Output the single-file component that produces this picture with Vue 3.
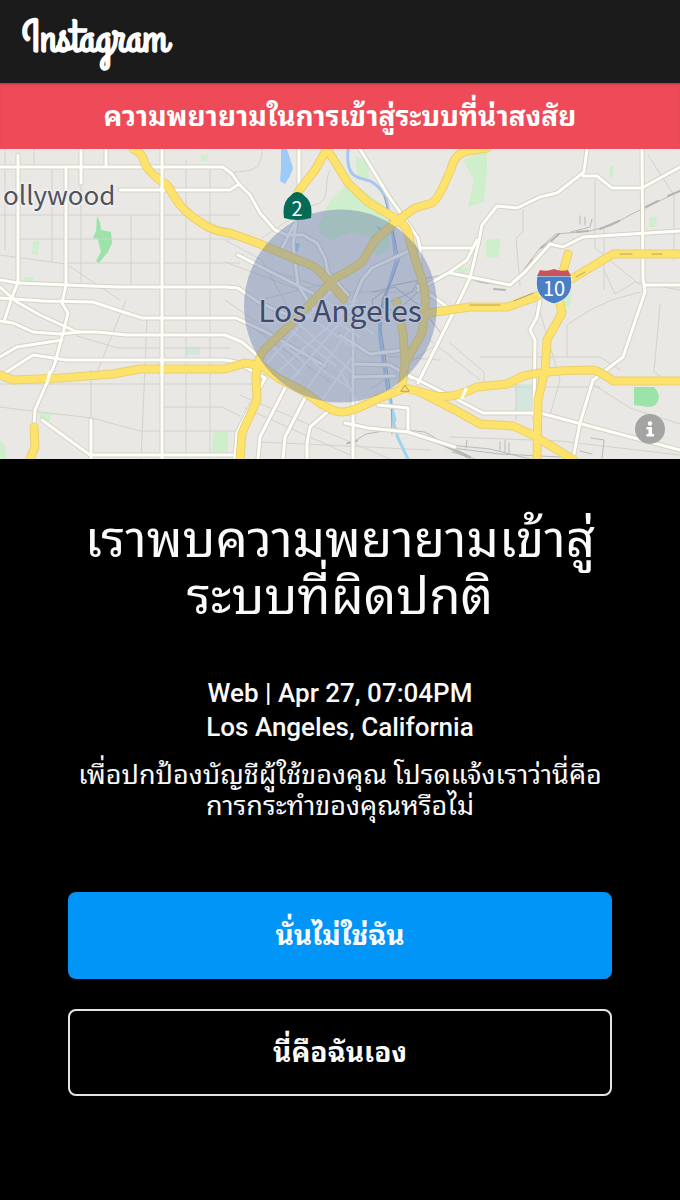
<script setup>
const minorStreets = [
  'M5 149V250 M34 149V166 M52 167V262 M131 215V285 M186 160V459 M210 170V459 M147 320L141 459',
  'M0 215H240 M18 239H240 M66 263H240 M0 384H260 M0 407L40 412L92 418L140 431H240 M162 407H222L240 416',
  'M0 255L66 264L120 300 M126 300L98 370 M91 370V420 M77 336L118 348H230 M81 186V282',
  'M262 149C262 178 243 168 226 174 M330 170C322 186 334 202 310 206L262 238 M225 262L300 290 M225 300L290 345',
  'M225 240L262 260L300 330 M270 270L330 290 M260 300L340 280 M245 322L330 382 M340 292L420 292',
  'M595 180V248L640 285 M523 210V232L516 238L520 285 M604 230V290 M480 357H600L620 370 M450 343L484 372V390',
  'M567 357V325L590 310L612 300L640 292 M660 305L654 372L668 382 M594 385L630 408L680 424 M516 384V420 M477 387H600',
  'M648 155L674 195V260 M604 270L615 294L635 282L680 290 M450 437L560 441L680 455 M540 312L560 380L550 415',
  'M245 408L350 455 M240 395L390 459 M370 355L440 360 M372 388L440 342 M260 442L430 450 M430 340L480 380',
]
const streets = [
  'M18 155V282L11 300L4 322',
  'M0 167H223L232 174L239 184L250 195L260 213L275 230L287 235L303 235L317 243L325 258L328 273L348 295',
  'M81 149V183 M106 149V166 M162 149V459 M91 420V459 M299 149V190',
  'M66 167V285L62 303L68 313L63 333L55 363L48 380L35 410L34 427',
  'M120 190H230L239 184',
  'M0 280L18 283L67 285L117 287H225L238 288L258 302L290 316',
  'M0 298L43 301L93 302L117 310L142 318H236L268 333L325 366',
  'M0 287L17 302L40 315L77 332L97 332L127 335H225L242 342L258 356',
  'M0 321L13 323L33 332L60 334L80 332',
  'M0 357L17 347L62 340 M5 373L33 355L67 360H225L236 362L265 378',
  'M42 420L90 455H240',
  'M587 149L584 172L557 193L540 197L517 208L497 206L482 225L478 245L470 278L457 305L418 383',
  'M583 176H597L612 188H642L680 167 M642 149L643 278L645 292L623 357L593 380L580 423L573 459',
  'M420 248H472 M680 231L583 237L563 247L550 244L525 272L510 285L450 273 M477 240L467 260L450 272L418 290 M645 285H680',
  'M360 149L388 195L418 238L420 248V278 M296 222L293 245L298 285L315 312',
  'M238 255L318 296 M294 225L280 252 M415 248L372 268L362 280L353 302V459',
  'M540 300L537 317L530 330L535 340L534 417 M458 400L483 413H540L680 450',
  'M265 378L237 433L235 459 M285 388L260 437L258 459 M305 398L285 437L283 459 M332 408L310 427L307 443V459',
  'M345 423L368 428L408 432L455 447 M378 405L408 408V432 M408 375L448 395 M353 364L390 365L412 378 M353 377L395 376',
  'M418 286L450 309 M340 335L370 354L412 349',
]
const downtown = [
  'M263 355L318 292L340 276 M268 362L334 288 M278 372L357 300 M288 384L354 306 M306 390L352 326 M322 400L353 356',
  'M284 325L336 366 M292 318L352 372 M301 311L354 348 M309 304L360 337 M318 296L374 334 M326 289L362 308',
  'M276 337L304 363 M270 344L300 374 M302 350L322 370L353 390 M340 370L357 402',
]
const highways = [
  'M34 427L35 447L30 459',
  'M133 149Q142 153 144 161Q147 172 167 185C175 196 177 207 200 222Q214 232 230 233L255 242L298 260Q316 265 324 276L344 299',
  'M0 375L13 380L60 378L113 374L140 369H225L245 363L262 366L278 378L305 392Q329 412 342 412Q352 412 375 400L405 388L436 396Q453 399 477 387L507 384L523 376Q549 370 593 370Q600 371 613 381H680',
  'M327 149L315 170L298 192',
  'M327 149L348 183L368 202L398 220Q409 227 410 242L418 268Q427 290 425 307L422 333L405 363L402 387',
  'M397 302L403 333L405 363',
  'M487 148L467 151Q454 154 451 169L443 187Q437 200 432 203L415 208L398 220L375 240L362 262Q353 269 335 278L288 327L266 348Q257 356 256 380L257 400L242 433L240 459',
  'M680 254H613L573 278L533 298L507 307L470 307L428 313',
  'M568 254L559 285V300L562 313L547 340L545 370L538 400L537 459',
  'M418 391L455 410L480 424L513 426L533 435L574 460',
]
const rails = [
  'M680 191L630 215L612 225L590 231L556 234L540 248L522 272L508 286L480 282L450 273L420 280L390 286L372 300L374 314L400 308L425 286L450 272',
  'M592 219L590 227L571 232 M580 216V224 M585 217V225 M372 292L395 287L420 306L440 332 M376 308L412 292L420 278',
  'M346 444L355 441L366 434L395 429L425 432L452 448L500 454L560 457',
  'M450 445L490 449L530 459 M452 452L475 459 M467 440L466 448 M500 442V450 M505 440V452 M509 443V453 M434 441L470 459 M591 438L604 440L602 459 M580 451L592 454',
]
const thickRails = [
  'M680 191L668 196 M658 201L644 208 M619 221L605 227L600 229 M588 231L577 232 M559 234L550 242L541 248 M533 260L526 268',
  'M494 289L505 290 M478 281L488 283 M348 443L357 441 M395 430L410 431 M435 442L455 450L470 457',
]
const parks = [
  'M97 216L100 222L101 230L111 232L112 243L108 252L99 263L96 261L101 252L98 240L93 237L96 232Z',
  'M634 387H654Q659 392 659 398Q657 407 648 407L634 405Z',
]
const softParks = [
  'M333 198L343 188L352 182L380 203L392 214L389 250L376 256L372 238L350 232L333 240L322 236L318 226L326 208Z',
  'M463 160L487 149L487 170L484 202L468 207L474 180Z',
  'M486 240L501 238L498 258L486 257Z', 'M33 242L39 240L38 255L32 254Z',
  'M201 155L209 154L207 161H201Z', 'M38 412L52 413L50 421H42Z',
  'M25 277L35 277L33 283H24Z', 'M213 433L228 431V452H212Z',
  'M355 156L368 161L369 178L358 176Z', 'M610 165L614 167L613 178H609Z',
  'M649 218L656 216L657 227H649Z', 'M0 440L6 447L5 459H0Z',
  'M563 293L572 291L570 307H558Z', 'M454 267L469 268L464 277Z',
]
</script>

<template>
  <div class="screen">
    <header class="topbar">
      <a class="brand" href="#">Instagram</a>
    </header>
    <p class="alert" role="alert">ความพยายามในการเข้าสู่ระบบที่น่าสงสัย</p>

    <section class="map" aria-label="Los Angeles">
      <svg class="map-art" viewBox="0 149 680 310" preserveAspectRatio="xMidYMid slice">
        <rect class="land" x="0" y="149" width="680" height="310" />
        <path v-for="d in softParks" :key="d" :d="d" class="park-soft" />
        <path v-for="d in parks" :key="d" :d="d" class="park" />
        <path class="tint" d="M516 384H533V412H516Z M186 347H200V355H186Z" />
        <path v-for="d in minorStreets" :key="d" :d="d" class="minor" />
        <path class="lake" d="M281 149H287L293 168L290 176L285 184L280 181L281 168Z" />
        <path class="lake" d="M296 243L300 244L297 252H294Z M376 225L382 229L380 232Z" />
        <path class="river" d="M348 149C345 184 363 176 372 182Q387 192 388 209L392 228L396 262L388 288L379 318L380 340L388 393" />
        <path class="canal" d="M388 393L395 420M391 400L394 425L398 438L408 459" />
        <path v-for="d in rails" :key="d" :d="d" class="rail" />
        <path v-for="d in thickRails" :key="d" :d="d" class="rail-thick" />
        <path class="rail-bed" d="M384 196L393 230L399 260L392 280L382 300L381 330L391 395L392 434" />
        <path v-for="d in streets" :key="'c' + d" :d="d" class="street-case" />
        <path v-for="d in streets" :key="d" :d="d" class="street" />
        <path v-for="d in downtown" :key="d" :d="d" class="downtown" />
        <path v-for="d in highways" :key="'c' + d" :d="d" class="highway-case" />
        <path v-for="d in highways" :key="d" :d="d" class="highway" />
        <path class="ramp" d="M620 254H632M652 254H662M585 272L576 277M533 293L514 301M500 305L470 305" />
        <path class="ramp" d="M401 391L405 385L409 391Z" />
        <path class="street" d="M162 176V190M162 362V376M462 398L466 389M50 372L47 383" />

        <circle class="area" cx="340.5" cy="306" r="96.5" />

        <path class="shield-green" d="M297 192C302 192 304 196 307 198Q313 205 311 218Q297 222 284 218Q282 205 288 198C291 196 293 192 297 192Z" />
        <text class="shield-text" x="297" y="216">2</text>
        <path class="shield-blue" d="M537 276H571C574 291 568 300 554 304C540 300 534 291 537 276Z" />
        <path class="shield-red" d="M540 270Q547 272 554 269Q561 272 568 270L571 276H537Z" />
        <text class="shield-text" x="554" y="296">10</text>

        <text class="place" x="3" y="205">ollywood</text>
        <text class="place city" x="340" y="322">Los Angeles</text>
      </svg>
      <button class="info" type="button" aria-label="Info">
        <svg viewBox="0 0 30 30">
          <circle cx="15" cy="15" r="15" fill="#a4a4a3" />
          <circle cx="15" cy="9.5" r="2.2" fill="#fff" />
          <path d="M11.5 13H17V20H19V22.5H11.5V20H13.5V15.5H11.5Z" class="info-stem" />
        </svg>
      </button>
    </section>

    <main class="content">
      <h1 class="title">
        <span>เราพบความพยายามเข้าสู่</span>
        <span>ระบบที่ผิดปกติ</span>
      </h1>
      <p class="login">
        <span>Web | Apr 27, 07:04PM</span>
        <span>Los Angeles, California</span>
      </p>
      <p class="hint">
        <span>เพื่อปกป้องบัญชีผู้ใช้ของคุณ โปรดแจ้งเราว่านี่คือ</span>
        <span>การกระทำของคุณหรือไม่</span>
      </p>
      <div class="actions">
        <button class="btn primary" type="button">นั่นไม่ใช่ฉัน</button>
        <button class="btn outline" type="button">นี่คือฉันเอง</button>
      </div>
    </main>
  </div>
</template>

<style>
body {
  margin: 0;
  background: #000;
}
</style>

<style scoped>
.screen {
  min-height: 100vh;
  background: #000;
  color: #fafafa;
  font-family: Roboto, "Noto Sans Thai Looped", "Droid Sans Thai", "Noto Looped Thai", Loma, Waree, Garuda, sans-serif;
}
.topbar {
  box-sizing: border-box;
  height: 83px;
  padding: 0 22px 6px;
  display: flex;
  align-items: center;
  background: #1b1b1b;
}
.brand {
  color: #fff;
  font: 700 46px/48px "Grand Hotel", "Billabong", cursive;
  text-decoration: none;
}
.alert {
  margin: 0;
  padding: 17px 24px 15px;
  background: #ef4a58;
  box-shadow: inset 0 2px 2px -1px #a93540;
  color: #fff;
  font-size: 28px;
  line-height: 34px;
  font-weight: 700;
  text-align: center;
}
.map {
  position: relative;
  height: 310px;
  overflow: hidden;
}
.map-art {
  display: block;
  width: 100%;
  height: 100%;
}
.map-art path {
  fill: none;
  stroke-linecap: round;
  stroke-linejoin: round;
}
.land { fill: #e9e8e4; }
.map-art .park { fill: #9be3a9; }
.map-art .park-soft { fill: #cfeecb; }
.map-art .tint { fill: #d3e7de; }
.map-art .lake { fill: #9ccbf7; }
.minor { stroke: #d3d3cb; stroke-width: 1; }
.river { stroke: #a5c8ee; stroke-width: 3; }
.canal { stroke: #a0d4ee; stroke-width: 3; }
.rail { stroke: #b9b9b9; stroke-width: 1; }
.rail-thick { stroke: #b4b4b2; stroke-width: 2; }
.rail-bed { stroke: #9ba3ae; stroke-width: 1; }
.street-case { stroke: #d3d3c7; stroke-width: 5; }
.street { stroke: #fffffa; stroke-width: 3; }
.downtown { stroke: #f7f7f7; stroke-width: 2; }
.highway-case { stroke: #e9d070; stroke-width: 9; }
.highway { stroke: #fde26c; stroke-width: 7; }
.ramp { stroke: #b9a25a; stroke-width: 1; }
.area { fill: #6179ab; fill-opacity: 0.42; }
.map-art .shield-green { fill: #056b55; }
.map-art .shield-blue { fill: #4a7fc6; stroke: #f4f4f4; stroke-width: 1; }
.map-art .shield-red { fill: #c9545c; }
.shield-text {
  fill: #fff;
  font: 20px "Noto Sans CJK JP", sans-serif;
  text-anchor: middle;
}
.place {
  fill: #50525e;
  stroke: #f0f0ee;
  stroke-width: 3px;
  paint-order: stroke;
  font: 26px "Noto Sans CJK JP", sans-serif;
}
.city {
  fill: #3f4a6c;
  stroke: #b9c1d2;
  font-size: 30px;
  text-anchor: middle;
}
.info {
  position: absolute;
  right: 15px;
  bottom: 15px;
  width: 30px;
  height: 30px;
  padding: 0;
  border: 0;
  background: none;
}
.info svg {
  display: block;
}
.info-stem {
  fill: #fff;
}
.content {
  padding: 52px 32px 104px;
  text-align: center;
}
.content span {
  display: block;
}
.title {
  margin: 0;
  font-size: 51px;
  line-height: 57px;
  font-weight: 400;
}
.login {
  margin: 51px 0 0;
  font-size: 26px;
  line-height: 34px;
  font-weight: 500;
}
.hint {
  margin: 16px 0 0;
  font-size: 27px;
  line-height: 31px;
}
.actions {
  margin: 70px 36px 0;
  display: flex;
  flex-direction: column;
  gap: 30px;
}
.btn {
  box-sizing: border-box;
  width: 100%;
  min-height: 87px;
  border: 2px solid #e4e4e4;
  border-radius: 8px;
  background: #000;
  color: #fafafa;
  font-family: inherit;
  font-size: 28px;
  line-height: 34px;
  font-weight: 700;
}
.primary {
  border-color: #0195f7;
  background: #0195f7;
}
</style>
